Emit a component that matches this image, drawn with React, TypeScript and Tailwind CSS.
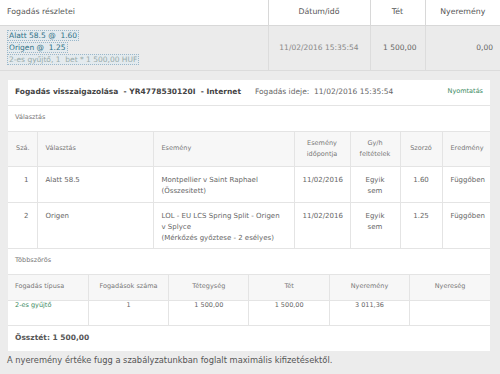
const font = { fontFamily: '"DejaVu Sans", Verdana, sans-serif' }

function SelBox({ children, muted }: { children: React.ReactNode; muted?: boolean }) {
  return (
    <span
      className={
        "inline-block h-[11px] px-px leading-[10px] border border-dotted border-[#9bb7c9] bg-[#e3eaee] " +
        (muted ? "text-[#9aa]" : "text-[#2f7186]")
      }
    >
      {children}
    </span>
  )
}

const th = "border border-[#e4e4e4] bg-[#f7f7f7] font-normal text-[#777] px-2 align-middle"
const td = "border border-[#e4e4e4] bg-white px-2 align-top text-[#666]"

export default function App() {
  return (
    <div className="w-[500px] h-[374px] overflow-hidden bg-[#ececec] text-[7.5px] text-[#666]" style={font}>
      {/* top summary */}
      <table className="w-full border-collapse table-fixed">
        <thead>
          <tr className="h-[25px] bg-white text-[7.8px]">
            <th className="w-[268px] border-b border-[#d8d8d8] text-left font-normal pl-[7px] text-[#555]">Fogadás részletei</th>
            <th className="w-[102px] border-b border-l border-[#d8d8d8] font-normal text-[#555]">Dátum/idő</th>
            <th className="w-[55px] border-b border-l border-[#d8d8d8] font-normal text-[#555]">Tét</th>
            <th className="border-b border-l border-[#d8d8d8] font-normal text-[#555]">Nyeremény</th>
          </tr>
        </thead>
        <tbody>
          <tr className="h-[45px] bg-[#ebebeb]">
            <td className="pl-[7px] border-b border-[#dcdcdc]">
              <div className="flex flex-col items-start gap-px">
                <SelBox>Alatt 58.5 @&nbsp; 1.60</SelBox>
                <SelBox>Origen @&nbsp; 1.25</SelBox>
                <SelBox muted>2-es gyűjtő, 1&nbsp; bet * 1 500,00 HUF</SelBox>
              </div>
            </td>
            <td className="border-b border-l border-[#dcdcdc] text-center text-[#888]">11/02/2016 15:35:54</td>
            <td className="border-b border-l border-[#dcdcdc] text-right pr-2">1 500,00</td>
            <td className="border-b border-l border-[#dcdcdc] text-right pr-[7px]">0,00</td>
          </tr>
        </tbody>
      </table>

      {/* confirmation panel */}
      <div className="mx-2 mt-[9px] w-[482px] bg-white">
        <div className="h-[26px] flex items-center px-[7px] border-b border-[#e4e4e4]">
          <span className="font-bold text-[#444] whitespace-pre">Fogadás visszaigazolása  - YR4778530120I  - Internet</span>
          <span className="ml-[14px] text-[#666] whitespace-pre">Fogadás ideje:  11/02/2016 15:35:54</span>
          <span className="ml-auto text-[6.5px] text-[#3b8a62]">Nyomtatás</span>
        </div>
        <div className="h-[25px] flex items-center px-[7px] text-[6.5px] text-[#777]">Választás</div>

        <table className="w-full border-collapse table-fixed">
          <thead>
            <tr className="h-[35px] text-[6.5px]">
              <th className={th + " w-[29px] text-left border-l-0"}>Szá.</th>
              <th className={th + " w-[116px] text-left"}>Választás</th>
              <th className={th + " w-[141px] text-left"}>Esemény</th>
              <th className={th + " w-[56px] text-center leading-[11px]"}>Esemény<br />időpontja</th>
              <th className={th + " w-[50px] text-center leading-[11px]"}>Gy/h<br />feltételek</th>
              <th className={th + " w-[42px] text-center"}>Szorzó</th>
              <th className={th + " text-center border-r-0"}>Eredmény</th>
            </tr>
          </thead>
          <tbody className="leading-[11px] text-[7px]">
            <tr className="h-[36px]">
              <td className={td + " pt-2 text-right border-l-0"}>1</td>
              <td className={td + " pt-2"}>Alatt 58.5</td>
              <td className={td + " pt-2"}>Montpellier v Saint Raphael<br />(Összesitett)</td>
              <td className={td + " pt-2 text-center"}>11/02/2016</td>
              <td className={td + " pt-2 text-center"}>Egyik<br />sem</td>
              <td className={td + " pt-2 text-center"}>1.60</td>
              <td className={td + " pt-2 text-center border-r-0"}>Függőben</td>
            </tr>
            <tr className="h-[46px]">
              <td className={td + " pt-2 text-right border-l-0"}>2</td>
              <td className={td + " pt-2"}>Origen</td>
              <td className={td + " pt-2 pr-1"}><span className="whitespace-nowrap">LOL - EU LCS Spring Split - Origen</span><br />v Splyce<br /><span className="whitespace-nowrap">(Mérkőzés győztese - 2 esélyes)</span></td>
              <td className={td + " pt-2 text-center"}>11/02/2016</td>
              <td className={td + " pt-2 text-center"}>Egyik<br />sem</td>
              <td className={td + " pt-2 text-center"}>1.25</td>
              <td className={td + " pt-2 text-center border-r-0"}>Függőben</td>
            </tr>
          </tbody>
        </table>

        <div className="h-[25px] flex items-center px-[7px] text-[6.5px] text-[#777]">Többszörös</div>

        <table className="w-full border-collapse table-fixed text-[6.5px]">
          <thead>
            <tr className="h-[26px]">
              <th className={th + " text-left pl-[7px] border-l-0"}>Fogadás típusa</th>
              <th className={th + " text-center"}>Fogadások száma</th>
              <th className={th + " text-center"}>Tétegység</th>
              <th className={th + " text-center"}>Tét</th>
              <th className={th + " text-center"}>Nyeremény</th>
              <th className={th + " text-center border-r-0"}>Nyereség</th>
            </tr>
          </thead>
          <tbody>
            <tr className="h-[25px]">
              <td className={td + " align-middle pl-[7px] !text-[#3b8a62] border-l-0"}>2-es gyűjtő</td>
              <td className={td + " align-middle text-center"}>1</td>
              <td className={td + " align-middle text-center"}>1 500,00</td>
              <td className={td + " align-middle text-center"}>1 500,00</td>
              <td className={td + " align-middle text-center"}>3 011,36</td>
              <td className={td + " align-middle border-r-0"}></td>
            </tr>
          </tbody>
        </table>

        <div className="h-[25px] flex items-center px-[7px] font-bold text-[#555]">Össztét: 1 500,00</div>
      </div>

      <p className="mt-[3px] pl-[7px] text-[8.3px] text-[#555]">A nyeremény értéke fugg a szabályzatunkban foglalt maximális kifizetésektől.</p>
    </div>
  )
}
